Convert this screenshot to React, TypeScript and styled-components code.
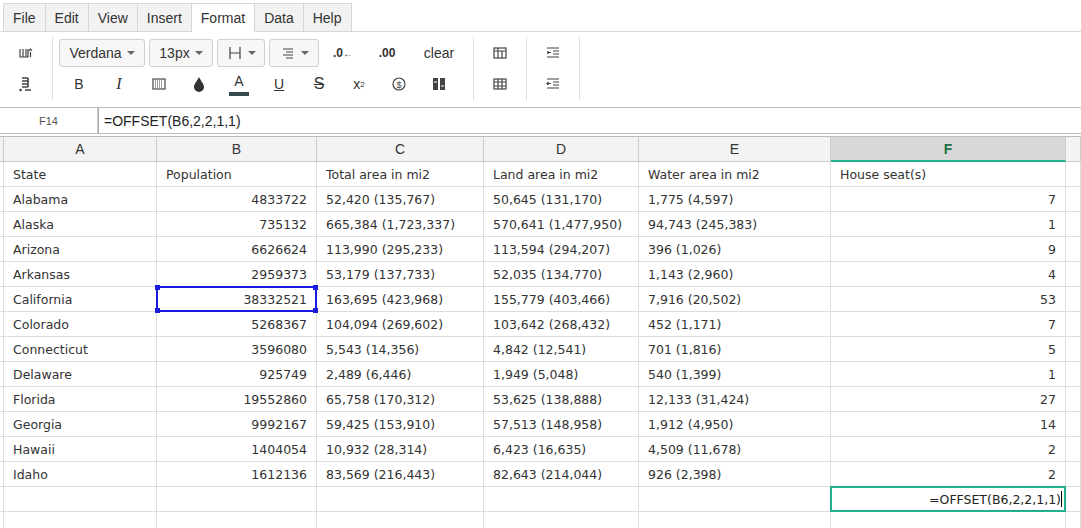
import React from "react";
import styled, { createGlobalStyle } from "styled-components";

const G = createGlobalStyle`
  body { margin: 0; background: #fff; font-family: "Liberation Sans", Arial, sans-serif; color: #333; overflow: hidden; }
`;

const Tabs = styled.div`display: flex; padding-left: 3px; height: 32px; border-bottom: 1px solid #d6d6d6; box-sizing: border-box;`;
const Tab = styled.div<{ $active?: boolean; $first?: boolean }>`
  padding: 0 9px; display: flex; align-items: center; font-size: 14px; color: #333;
  background: ${p => (p.$active ? "#fff" : "#f2f2f2")};
  border: 1px solid #d6d6d6; border-left: ${p => (p.$first ? "1px solid #d6d6d6" : "none")};
  border-bottom: ${p => (p.$active ? "1px solid #fff" : "none")};
  margin-bottom: ${p => (p.$active ? "-1px" : "0")};
  margin-top: 3px;
`;

const Toolbar = styled.div`display: flex; height: 72px; align-items: stretch; padding-top: 3px; box-sizing: border-box;`;
const Group = styled.div`
  display: flex; flex-direction: column; justify-content: space-around; padding: 0 6px;
  border-right: 1px solid #ddd; margin: 2px 0 4px;
`;
const Row = styled.div<{ $gap?: number }>`display: flex; align-items: center; gap: ${p => p.$gap ?? 4}px; height: 30px;`;
const Drop = styled.div<{ $w: number }>`
  width: ${p => p.$w}px; height: 28px; box-sizing: border-box; border: 1px solid #d0d0d0; border-radius: 3px;
  background: #f7f7f7; display: flex; align-items: center; justify-content: center; gap: 5px; font-size: 14px; color: #333;
`;
const Caret = styled.span`width:0;height:0;border-left:4px solid transparent;border-right:4px solid transparent;border-top:4px solid #666;`;
const Btn = styled.div<{ $w?: number }>`
  width: ${p => p.$w ?? 40}px; height: 28px; display: flex; align-items: center; justify-content: center; font-size: 14px; color: #333;
`;

const FormulaBar = styled.div`display: flex; height: 25px; margin-top: 3px; border-top: 1px solid #bbb; border-bottom: 1px solid #bbb;`;
const NameBox = styled.div`width: 97px; font-size: 11px; display: flex; align-items: center; justify-content: center; color: #555; border-right: 1px solid #ccc;`;
const Formula = styled.div`flex: 1; font-size: 14px; display: flex; align-items: center; padding-left: 5px; color: #222; border-left: 1px solid #aaa;`;

const Grid = styled.div`margin-top: 2px; border-top: 1px solid #bbb;`;
const GridRow = styled.div`display: flex; height: 25px;`;
const Cell = styled.div<{ $w: number; $right?: boolean }>`
  width: ${p => p.$w}px; flex: none; box-sizing: border-box; border-right: 1px solid #ddd; border-bottom: 1px solid #ddd;
  font-family: "DejaVu Sans", Verdana, sans-serif; font-size: 12.5px; color: #333;
  display: flex; align-items: center; padding: 0 9px; white-space: nowrap;
  justify-content: ${p => (p.$right ? "flex-end" : "flex-start")};
  position: relative;
`;
const Head = styled(Cell)<{ $sel?: boolean }>`
  padding: 0;
  background: ${p => (p.$sel ? "#d8d8d8" : "#f3f3f3")}; justify-content: center;
  font-family: "Liberation Sans", Arial, sans-serif; font-size: 14px;
  color: ${p => (p.$sel ? "#217346" : "#333")}; font-weight: ${p => (p.$sel ? 700 : 400)};
  border-bottom: ${p => (p.$sel ? "2px solid #21b28d" : "1px solid #ccc")}; border-right-color: #ccc;
`;
const SelBox = styled.div`position: absolute; inset: -1px; border: 2px solid #1b1bdf; z-index: 2;
  & > i { position: absolute; width: 5px; height: 5px; background: #1b1bdf; }
`;
const EditBox = styled.div`position: absolute; inset: -1px; border: 2px solid #21b28d; display:flex; align-items:center; justify-content:flex-end; padding-right: 2px; background:#fff; color:#222; z-index: 2;`;

const widths = [4, 153, 160, 167, 155, 192, 235, 15];
const data: string[][] = [
  ["State", "Population", "Total area in mi2", "Land area in mi2", "Water area in mi2", "House seat(s)"],
  ["Alabama", "4833722", "52,420 (135,767)", "50,645 (131,170)", "1,775 (4,597)", "7"],
  ["Alaska", "735132", "665,384 (1,723,337)", "570,641 (1,477,950)", "94,743 (245,383)", "1"],
  ["Arizona", "6626624", "113,990 (295,233)", "113,594 (294,207)", "396 (1,026)", "9"],
  ["Arkansas", "2959373", "53,179 (137,733)", "52,035 (134,770)", "1,143 (2,960)", "4"],
  ["California", "38332521", "163,695 (423,968)", "155,779 (403,466)", "7,916 (20,502)", "53"],
  ["Colorado", "5268367", "104,094 (269,602)", "103,642 (268,432)", "452 (1,171)", "7"],
  ["Connecticut", "3596080", "5,543 (14,356)", "4,842 (12,541)", "701 (1,816)", "5"],
  ["Delaware", "925749", "2,489 (6,446)", "1,949 (5,048)", "540 (1,399)", "1"],
  ["Florida", "19552860", "65,758 (170,312)", "53,625 (138,888)", "12,133 (31,424)", "27"],
  ["Georgia", "9992167", "59,425 (153,910)", "57,513 (148,958)", "1,912 (4,950)", "14"],
  ["Hawaii", "1404054", "10,932 (28,314)", "6,423 (16,635)", "4,509 (11,678)", "2"],
  ["Idaho", "1612136", "83,569 (216,443)", "82,643 (214,044)", "926 (2,398)", "2"],
  ["", "", "", "", "", ""],
  ["", "", "", "", "", ""],
];

const I = ({ children, w = 16 }: { children: React.ReactNode; w?: number }) => (
  <svg width={w} height={16} viewBox="0 0 16 16" fill="none" stroke="#444" strokeWidth={1.2}>{children}</svg>
);

export default function App() {
  return (
    <>
      <G />
      <Tabs>
        {["File", "Edit", "View", "Insert", "Format", "Data", "Help"].map((t, i) => (
          <Tab key={t} $first={i === 0} $active={t === "Format"}>{t}</Tab>
        ))}
      </Tabs>
      <Toolbar>
        <Group>
          <Btn><I><path d="M2 4v8h8V4M5 4v8M8 4v8M12.5 7v5M11 6l1.5-2 1.5 2" /></I></Btn>
          <Btn><I><path d="M4 2h6M4 5h6M4 8h6M4 11h6M10 2v9M2 14h2M3 13l-1 1 1 1M7 14h6" strokeWidth="1.6" /></I></Btn>
        </Group>
        <Group>
          <Row>
            <Drop $w={86}>Verdana <Caret /></Drop>
            <Drop $w={64}>13px <Caret /></Drop>
            <Drop $w={48}><I><path d="M3 2v12M3 8h10M13 2v12" /></I><Caret /></Drop>
            <Drop $w={50}><I><path d="M3 4h10M6 7h7M3 10h10M6 13h7" /></I><Caret /></Drop>
            <Btn><span style={{ fontSize: 12, fontWeight: 700 }}>.0<span style={{ fontSize: 10 }}>←</span></span></Btn>
            <Btn><span style={{ fontSize: 12, fontWeight: 700 }}>.00</span></Btn>
            <Btn $w={56}>clear</Btn>
          </Row>
          <Row $gap={0}>
            <Btn>B</Btn>
            <Btn><i style={{ fontFamily: "Liberation Serif, serif", fontSize: 16 }}>I</i></Btn>
            <Btn><I><rect x="2" y="3" width="12" height="10" /><path d="M4 5h8M4 7h8M4 9h8M4 11h8" strokeDasharray="1 1" /></I></Btn>
            <Btn><svg width="14" height="16" viewBox="0 0 14 16"><path d="M7 1C5 5 2 8 2 11a5 5 0 0 0 10 0c0-3-3-6-5-10z" fill="#333" /></svg></Btn>
            <Btn><span style={{ display: "flex", flexDirection: "column", alignItems: "center" }}>A<span style={{ width: 20, height: 4, background: "#37474f", marginTop: 3 }} /></span></Btn>
            <Btn><span style={{ textDecoration: "underline" }}>U</span></Btn>
            <Btn><span style={{ textDecoration: "line-through", fontSize: 16 }}>S</span></Btn>
            <Btn>x<sup style={{ fontSize: 8 }}>2</sup></Btn>
            <Btn><I><circle cx="8" cy="8" r="6" /><text x="8" y="11.5" fontSize="9" textAnchor="middle" fill="#444" stroke="none">$</text></I></Btn>
            <Btn><svg width="14" height="16" viewBox="0 0 14 16"><rect x="1" y="2" width="5" height="12" fill="#444" /><rect x="8" y="2" width="5" height="12" fill="#444" /><path d="M2 6h3M9 10h3" stroke="#fff" /></svg></Btn>
          </Row>
        </Group>
        <Group>
          <Btn><I><rect x="2" y="3" width="12" height="10" /><path d="M2 6h12M6 3v10M10 6v7" /></I></Btn>
          <Btn><I><rect x="2" y="3" width="12" height="10" /><path d="M2 6h12M2 10h12M6 3v10M10 3v10" /></I></Btn>
        </Group>
        <Group>
          <Btn><I><path d="M2 3h12M8 6h6M8 9h6M2 12h12M2 7.5h4M3 6v3" /></I></Btn>
          <Btn><I><path d="M2 3h12M8 6h6M8 9h6M2 12h12M2 7.5h4M3.5 6L2 7.5 3.5 9" /></I></Btn>
        </Group>
      </Toolbar>
      <FormulaBar>
        <NameBox>F14</NameBox>
        <Formula>=OFFSET(B6,2,2,1,1)</Formula>
      </FormulaBar>
      <Grid>
        <GridRow>
          {["", "A", "B", "C", "D", "E", "F", ""].map((h, i) => (
            <Head key={i} $w={widths[i]} $sel={h === "F"}>{h}</Head>
          ))}
        </GridRow>
        {data.map((r, ri) => (
          <GridRow key={ri}>
            <Cell $w={4} style={{ padding: 0 }} />
            {r.map((v, ci) => (
              <Cell key={ci} $w={widths[ci + 1]} $right={ri > 0 && (ci === 1 || ci === 5)}>
                {v}
                {ri === 5 && ci === 1 && (
                  <SelBox>
                    <i style={{ left: -3, top: -3 }} /><i style={{ right: -3, top: -3 }} />
                    <i style={{ left: -3, bottom: -3 }} /><i style={{ right: -3, bottom: -3 }} />
                  </SelBox>
                )}
                {ri === 13 && ci === 5 && <EditBox>=OFFSET(B6,2,2,1,1)<span style={{ borderLeft: "1px solid #000", height: 16 }} /></EditBox>}
              </Cell>
            ))}
            <Cell $w={15} style={{ padding: 0 }} />
          </GridRow>
        ))}
      </Grid>
    </>
  );
}
